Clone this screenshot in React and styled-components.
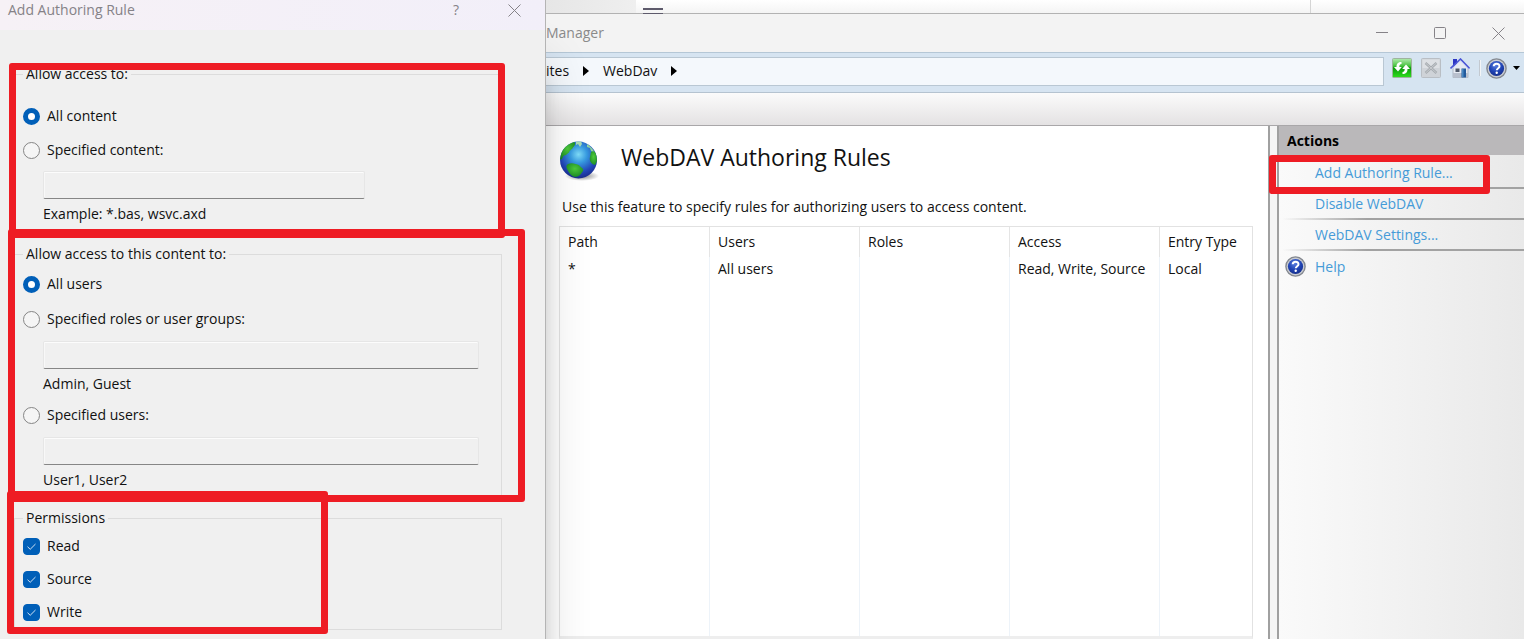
import { useState } from "react";
import styled, { createGlobalStyle } from "styled-components";

const GlobalStyle = createGlobalStyle`
  * {
    box-sizing: border-box;
  }

  body {
    margin: 0;
    background: #f0f0f0;
    color: #111;
    font-family: "Open Sans", "Noto Sans", sans-serif;
    font-size: 14px;
    line-height: 20px;
  }

  button,
  input {
    font: inherit;
    color: inherit;
  }
`;

const Desktop = styled.div`
  display: flex;
  height: 100vh;
  min-height: 639px;
  overflow: hidden;
`;

/* ---------- dialog ---------- */

const Dialog = styled.section`
  position: relative;
  z-index: 1;
  flex: 0 0 546px;
  background: #f0f0f0;
  border-right: 1px solid #b4b4b4;
  box-shadow: 0 80px 14px rgba(0, 0, 0, 0.1), 0 60px 44px rgba(0, 0, 0, 0.16);
`;

const DialogBar = styled.header`
  display: flex;
  align-items: flex-start;
  height: 30px;
  padding: 0 23px 0 8px;
  background: linear-gradient(90deg, #f6f1f6, #f2eff9);
  color: #858287;

  h2 {
    flex: 1;
    margin: 0;
    font-size: 14px;
    font-weight: 400;
  }
`;

const BarButton = styled.button`
  display: flex;
  align-items: center;
  justify-content: center;
  width: ${({ $width }) => $width || 58}px;
  height: 20px;
  padding: 0;
  border: 0;
  background: none;
  color: #858287;
`;

const DialogTools = styled.div`
  display: flex;
  gap: 42px;
`;

const DialogBody = styled.form`
  display: flex;
  flex-direction: column;
  gap: 11px;
  padding: 34px 43px 8px 14px;
`;

const Group = styled.fieldset`
  position: relative;
  display: block;
  min-width: 0;
  height: ${({ $height }) => $height}px;
  margin: 0;
  padding: ${({ $top }) => $top}px 8px 0;
  border: 1px solid #dcdcdc;

  legend {
    padding: 0 3px;
  }
`;

const Option = styled.label`
  display: flex;
  align-items: center;
  gap: 7px;
  width: fit-content;
  height: 20px;
  margin-top: ${({ $space }) => $space || 0}px;

  input {
    appearance: none;
    flex: none;
    width: 17px;
    height: 17px;
    margin: 0;
    border: 1px solid #858585;
    background: #f5f5f5;
  }

  input[type="radio"] {
    border-radius: 50%;
  }

  input[type="radio"]:checked {
    border: 5px solid #005fb8;
    background: #fff;
  }

  input[type="checkbox"] {
    border-radius: 4px;
  }

  input[type="checkbox"]:checked {
    border-color: #005fb8;
    background: #005fb8;
  }
`;

const CheckCell = styled.span`
  display: grid;
  flex: none;

  > * {
    grid-area: 1 / 1;
  }

  svg {
    pointer-events: none;
  }
`;

const Field = styled.div`
  display: flex;
  flex-direction: column;
  gap: 5px;
  margin-top: ${({ $space }) => $space || 12}px;
  margin-left: 20px;

  input {
    width: ${({ $width }) => $width}px;
    max-width: 100%;
    height: 28px;
    padding: 0 6px;
    border: 1px solid #e6e6e6;
    border-bottom-color: #868686;
    border-radius: 2px;
    background: #f0f0f0;
    box-shadow: inset 0 1px 0 #fcfcfc, inset 1px 0 0 #f8f8f8;
  }
`;

/* red marker rectangle drawn over the windows */
const Marker = styled.div`
  position: absolute;
  z-index: 2;
  top: ${({ $top }) => $top}px;
  left: ${({ $left }) => $left}px;
  width: ${({ $width }) => $width}px;
  height: ${({ $height }) => $height}px;
  border: 7px solid #ee1c24;
  border-radius: 3px;
  pointer-events: none;
`;

/* ---------- manager window ---------- */

const Side = styled.div`
  display: flex;
  flex: 1;
  flex-direction: column;
  min-width: 0;
`;

const BackStrip = styled.div`
  display: flex;
  height: 14px;
  border-bottom: 1px solid #b2b2b2;
  background: linear-gradient(#fff, #f4f4f4);
`;

const BackTab = styled.div`
  width: 90px;
  background: linear-gradient(90deg, #e6e6e6, #efefef);
`;

const BackMenu = styled.div`
  width: 20px;
  height: 6px;
  margin: 8px 0 0 7px;
  border: solid #5d5a6b;
  border-width: 2px 0 1px;
`;

const BackPane = styled.div`
  width: 214px;
  margin-left: auto;
  border-left: 1px solid #d5d5d5;
`;

const TitleBar = styled.header`
  display: flex;
  align-items: center;
  height: 38px;
  background: #f3f3f3;
  color: #8a8a8a;

  h1 {
    flex: 1;
    margin: 0;
    font-size: 14px;
    font-weight: 400;
  }
`;

const WindowButtons = styled.div`
  display: flex;
  margin-right: -3px;
`;

const Toolbar = styled.nav`
  display: flex;
  align-items: flex-start;
  height: 41px;
  padding-top: 4px;
  border-top: 1px solid #b5c7d6;
  border-bottom: 1px solid #b5c3d0;
  background: #d6e4f1;
`;

const Address = styled.div`
  display: flex;
  flex: 1;
  align-items: center;
  gap: 14px;
  height: 29px;
  padding-bottom: 2px;
  border: 1px solid #b9c7d3;
  border-left: 0;
  background: #f4f8fc;

  a {
    color: #111;
    text-decoration: none;
  }
`;

const Tools = styled.div`
  display: flex;
  align-items: center;
  height: 22px;
  padding: 0 4px 0 8px;
`;

const ToolButton = styled.button`
  display: flex;
  align-items: center;
  justify-content: center;
  width: ${({ $width }) => $width || 29}px;
  height: 22px;
  padding: 0;
  border: 0;
  background: none;
`;

const Divider = styled.span`
  width: 2px;
  height: 16px;
  margin-left: 9px;
  border-left: 1px solid #c3c9d0;
  background: #f3f5f7;
`;

const Band = styled.div`
  height: 33px;
  border-bottom: 1px solid #a9a7a9;
  background: linear-gradient(#fbfbfb, #e4e2e3);
`;

const Columns = styled.div`
  display: flex;
  flex: 1;
  gap: 7px;
  min-height: 0;
  background: #f5f5f5;
`;

const Feature = styled.main`
  display: flex;
  flex: 1;
  flex-direction: column;
  min-width: 0;
  padding: 12px 15px 0 13px;
  border-right: 2px solid #a0a0a0;
  background: #fff;

  p {
    margin: 13px 4px 9px 3px;
  }
`;

const FeatureTitle = styled.div`
  display: flex;
  align-items: center;
  gap: 22px;
  height: 46px;

  h2 {
    margin: 0 0 8px;
    font-size: 23px;
    font-weight: 400;
    line-height: 32px;
  }
`;

const RulesBox = styled.div`
  display: flex;
  flex: 1;
  border: 1px solid #e2e2e2;
  border-bottom: 3px solid #eeeeee;
`;

const RulesTable = styled.table`
  width: 100%;
  height: 100%;
  border-collapse: separate;
  border-spacing: 0;
  table-layout: fixed;

  th,
  td {
    height: 26px;
    padding: 2px 0 0 8px;
    border-right: 1px solid #edf3f9;
    font-weight: 400;
    line-height: 20px;
    text-align: left;
    vertical-align: top;
    white-space: nowrap;
  }

  th {
    height: 30px;
    padding-top: 5px;
    border-right-color: #e5e5e5;
  }

  th:last-child,
  td:last-child {
    border-right: 0;
  }

  tbody tr:last-child td {
    height: auto;
  }
`;

const Actions = styled.aside`
  position: relative;
  flex: 0 0 247px;
  border-left: 2px solid #a0a0a0;
  background: linear-gradient(90deg, #fafafa, #e9e9e9);

  h3 {
    height: 29px;
    margin: 0;
    padding: 5px 8px 0;
    background: #bab8ba;
    color: #000;
    font-size: 14px;
    font-weight: 700;
  }

  ul {
    margin: 0;
    padding: 3px 0 0 4px;
    list-style: none;
  }
`;

const ActionItem = styled.li`
  display: grid;
  grid-template-columns: 24px 1fr;
  align-items: center;
  column-gap: 8px;
  height: 31px;
  border-bottom: ${({ $line }) => ($line ? 2 : 0)}px solid;
  border-image: linear-gradient(90deg, transparent, #a2a2a2 35%) 1;

  a {
    grid-column: 2;
    color: #459bd8;
    text-decoration: none;
  }

  svg {
    justify-self: center;
  }
`;

const CloseIcon = () => (
  <svg width="13" height="13" viewBox="0 0 13 13" stroke="currentColor">
    <path d="M.5.5l12 12M12.5.5l-12 12" />
  </svg>
);

const MinimizeIcon = () => (
  <svg width="12" height="12" viewBox="0 0 12 12" stroke="currentColor">
    <path d="M0 5.5h12" />
  </svg>
);

const MaximizeIcon = () => (
  <svg width="12" height="12" viewBox="0 0 12 12" fill="none" stroke="currentColor">
    <rect x=".5" y=".5" width="11" height="11" rx="1" />
  </svg>
);

const CrumbArrow = () => (
  <svg width="6" height="10" viewBox="0 0 6 10">
    <path d="M0 0l6 5-6 5z" fill="#000" />
  </svg>
);

const RefreshIcon = () => (
  <svg width="20" height="20" viewBox="0 0 20 20">
    <defs>
      <linearGradient id="refresh" x2="0" y2="1">
        <stop offset="0" stopColor="#b4ebb0" />
        <stop offset=".4" stopColor="#46c23d" />
        <stop offset=".5" stopColor="#0b9a0a" />
        <stop offset="1" stopColor="#2fe01e" />
      </linearGradient>
    </defs>
    <rect x=".5" y=".5" width="19" height="19" rx="1" fill="url(#refresh)" stroke="#9fb39f" />
    <path d="M9.500 4C6 4 4.500 5.500 4.500 9H2l4 4.500L9.800 9H7.300C7.300 7.300 7.800 6.200 9.500 6z" fill="#fff" />
    <path d="M10.500 16c3.500 0 5-1.500 5-5H18l-4-4.500L10.200 11h2.500c0 1.700-.5 2.800-2.200 3z" fill="#fff" />
  </svg>
);

const StopIcon = () => (
  <svg width="20" height="20" viewBox="0 0 20 20">
    <rect x=".5" y=".5" width="19" height="19" rx="1" fill="#cfd3d8" stroke="#b9bec4" />
    <path d="M1.500 10V1.500h17V10z" fill="#dde0e4" />
    <path d="M4.500 5l11 10M15.500 5l-11 10" stroke="#a6abb0" strokeWidth="2.400" />
    <path d="M4.500 5l11 10M15.500 5l-11 10" stroke="#cfd2d5" strokeWidth=".8" />
  </svg>
);

const HomeIcon = () => (
  <svg width="20" height="20" viewBox="0 0 20 20">
    <path d="M3 1h4v5L3 9z" fill="#2c35c4" />
    <path d="M3 9.500L10.500 2 18 9.500V19.500H3z" fill="#e6eaf2" stroke="#a4acba" strokeWidth=".8" />
    <path d="M3 15h15v4.500H3z" fill="#b9c0cd" />
    <path d="M.5 10.500l10-9.500 9 9.500" fill="none" stroke="#4a55d6" strokeWidth="1.600" />
    <path d="M1.800 11l8.700-8.200 7.900 8.200" fill="none" stroke="#c9d2ff" strokeWidth=".8" />
    <path d="M5.500 10.500h4v3.500h-4z" fill="#4f5868" />
    <path d="M11.500 10.500h4.500v9h-4.500z" fill="#225a9c" />
    <path d="M12 11h1.500v8H12z" fill="#4b8ac4" />
  </svg>
);

const HelpIcon = () => (
  <svg width="21" height="21" viewBox="0 0 21 21">
    <defs>
      <radialGradient id="help" cx=".45" cy=".3" r=".75">
        <stop offset="0" stopColor="#5a7fe0" />
        <stop offset=".55" stopColor="#1f43b4" />
        <stop offset="1" stopColor="#142c86" />
      </radialGradient>
    </defs>
    <circle cx="10.500" cy="10.500" r="9.600" fill="#c9ccd2" stroke="#84888f" strokeWidth="1.400" />
    <circle cx="10.500" cy="10.500" r="7.600" fill="url(#help)" />
    <path
      d="M7.700 8.300c.1-3.400 5.900-3.400 5.800 0 0 1.900-2.700 2-2.700 4"
      fill="none"
      stroke="#fff"
      strokeWidth="2"
    />
    <circle cx="10.700" cy="14.800" r="1.200" fill="#fff" />
  </svg>
);

const DropIcon = () => (
  <svg width="7" height="4" viewBox="0 0 7 4">
    <path d="M0 0h7L3.500 4z" fill="#000" />
  </svg>
);

const CheckIcon = () => (
  <svg width="17" height="17" viewBox="0 0 17 17" fill="none" stroke="#d3e4f5">
    <path d="M4.500 8.700l2.700 2.600 5.300-5.300" />
  </svg>
);

const GlobeIcon = () => (
  <svg width="40" height="42" viewBox="0 0 40 42">
    <defs>
      <radialGradient id="sea" cx=".5" cy=".35" r=".65">
        <stop offset="0" stopColor="#7fdcf8" />
        <stop offset=".35" stopColor="#379ae0" />
        <stop offset=".75" stopColor="#2246b8" />
        <stop offset="1" stopColor="#1b2c8c" />
      </radialGradient>
      <radialGradient id="land" cx=".5" cy=".4" r=".7">
        <stop offset="0" stopColor="#4ecb3a" />
        <stop offset="1" stopColor="#158222" />
      </radialGradient>
      <radialGradient id="shade">
        <stop offset="0" stopColor="#000" stopOpacity=".5" />
        <stop offset="1" stopColor="#000" stopOpacity="0" />
      </radialGradient>
      <clipPath id="ball">
        <circle cx="19.500" cy="20" r="18.500" />
      </clipPath>
    </defs>
    <ellipse cx="23" cy="36" rx="17" ry="5" fill="url(#shade)" />
    <circle cx="19.500" cy="20" r="18.500" fill="url(#sea)" />
    <g clipPath="url(#ball)">
      <path d="M1 18C2 9 7 3 15 1.500c2 2 1 4-1 6-1 2-3 2-4 5-2 1-3 3-5 3-2 2-1 4-4 4z" fill="url(#land)" />
      <path d="M17 1h5l1 3-2 3-2-3-2 1z" fill="#a8dbb5" />
      <path d="M28 4c3 2 6 5 8 9l-4-2-1-3-3-1z" fill="#8fd39b" />
      <path d="M32 12c3-2 5 0 6 4 1 3 0 6-2 9-4-1-6-4-5-8z" fill="url(#land)" />
      <path d="M9 24c4-2 8 0 11 1 2 3 5 3 4 6-2 3-4 6-8 6-4-1-6-4-8-8-1-2-1-4 1-5z" fill="url(#land)" />
    </g>
  </svg>
);

const columns = ["Path", "Users", "Roles", "Access", "Entry Type"];
const rules = [["*", "All users", "", "Read, Write, Source", "Local"]];
const actions = ["Add Authoring Rule...", "Disable WebDAV", "WebDAV Settings..."];

const AuthoringRuleDialog = () => {
  const [form, setForm] = useState({
    content: "all",
    users: "all",
    Read: true,
    Source: true,
    Write: true,
  });

  const update = (key, value) => setForm((prev) => ({ ...prev, [key]: value }));

  const renderRadio = (name, value, text, space) => (
    <Option $space={space}>
      <input
        type="radio"
        name={name}
        checked={form[name] === value}
        onChange={() => update(name, value)}
      />
      {text}
    </Option>
  );

  return (
    <Dialog>
      <DialogBar>
        <h2>Add Authoring Rule</h2>
        <DialogTools>
          <BarButton type="button" aria-label="Help" $width={16}>?</BarButton>
          <BarButton type="button" aria-label="Close" $width={16}>
            <CloseIcon />
          </BarButton>
        </DialogTools>
      </DialogBar>
      <DialogBody>
        <Group $top={22} $height={169}>
          <legend>Allow access to:</legend>
          {renderRadio("content", "all", "All content")}
          {renderRadio("content", "specified", "Specified content:", 14)}
          <Field $width={322} $space={11}>
            <input aria-label="Specified content" disabled={form.content !== "specified"} />
            <span>Example: *.bas, wsvc.axd</span>
          </Field>
        </Group>
        <Group $top={10} $height={253}>
          <legend>Allow access to this content to:</legend>
          {renderRadio("users", "all", "All users")}
          {renderRadio("users", "roles", "Specified roles or user groups:", 15)}
          <Field $width={436}>
            <input aria-label="Roles or user groups" disabled={form.users !== "roles"} />
            <span>Admin, Guest</span>
          </Field>
          {renderRadio("users", "users", "Specified users:", 11)}
          <Field $width={436}>
            <input aria-label="Users" disabled={form.users !== "users"} />
            <span>User1, User2</span>
          </Field>
        </Group>
        <Group $top={8} $height={122}>
          <legend>Permissions</legend>
          {["Read", "Source", "Write"].map((name, index) => (
            <Option key={name} $space={index ? 13 : 0}>
              <CheckCell>
                <input
                  type="checkbox"
                  checked={form[name]}
                  onChange={(e) => update(name, e.target.checked)}
                />
                {form[name] && <CheckIcon />}
              </CheckCell>
              {name}
            </Option>
          ))}
        </Group>
      </DialogBody>
      <Marker $left={9} $top={63} $width={496} $height={175} />
      <Marker $left={8} $top={229} $width={517} $height={273} />
      <Marker $left={7} $top={491} $width={321} $height={143} />
    </Dialog>
  );
};

const App = () => {
  return (
    <>
      <GlobalStyle />
      <Desktop>
        <AuthoringRuleDialog />
        <Side>
          <BackStrip>
            <BackTab />
            <BackMenu />
            <BackPane />
          </BackStrip>
          <TitleBar>
            <h1>Manager</h1>
            <WindowButtons>
              <BarButton aria-label="Minimize"><MinimizeIcon /></BarButton>
              <BarButton aria-label="Maximize"><MaximizeIcon /></BarButton>
              <BarButton aria-label="Close"><CloseIcon /></BarButton>
            </WindowButtons>
          </TitleBar>
          <Toolbar>
            <Address>
              <a href="#sites">ites</a>
              <CrumbArrow />
              <a href="#webdav">WebDav</a>
              <CrumbArrow />
            </Address>
            <Tools>
              <ToolButton aria-label="Refresh" $width={20}><RefreshIcon /></ToolButton>
              <ToolButton aria-label="Stop" $width={38}><StopIcon /></ToolButton>
              <ToolButton aria-label="Home" $width={20}><HomeIcon /></ToolButton>
              <Divider />
              <ToolButton aria-label="Help" $width={31}><HelpIcon /></ToolButton>
              <ToolButton aria-label="Help options" $width={8}><DropIcon /></ToolButton>
            </Tools>
          </Toolbar>
          <Band />
          <Columns>
            <Feature>
              <FeatureTitle>
                <GlobeIcon />
                <h2>WebDAV Authoring Rules</h2>
              </FeatureTitle>
              <p>Use this feature to specify rules for authorizing users to access content.</p>
              <RulesBox>
                <RulesTable>
                  <colgroup>
                    <col width="150" />
                    <col width="150" />
                    <col width="150" />
                    <col width="150" />
                    <col />
                  </colgroup>
                  <thead>
                    <tr>
                      {columns.map((column) => (
                        <th key={column}>{column}</th>
                      ))}
                    </tr>
                  </thead>
                  <tbody>
                    {rules.map((rule) => (
                      <tr key={rule[0]}>
                        {rule.map((cell, index) => (
                          <td key={columns[index]}>{cell}</td>
                        ))}
                      </tr>
                    ))}
                  </tbody>
                </RulesTable>
              </RulesBox>
            </Feature>
            <Actions>
              <h3>Actions</h3>
              <ul>
                {actions.map((action) => (
                  <ActionItem key={action} $line>
                    <a href="#action">{action}</a>
                  </ActionItem>
                ))}
                <ActionItem>
                  <HelpIcon />
                  <a href="#help">Help</a>
                </ActionItem>
              </ul>
              <Marker $left={-10} $top={29} $width={221} $height={39} />
            </Actions>
          </Columns>
        </Side>
      </Desktop>
    </>
  );
};

export default App;
